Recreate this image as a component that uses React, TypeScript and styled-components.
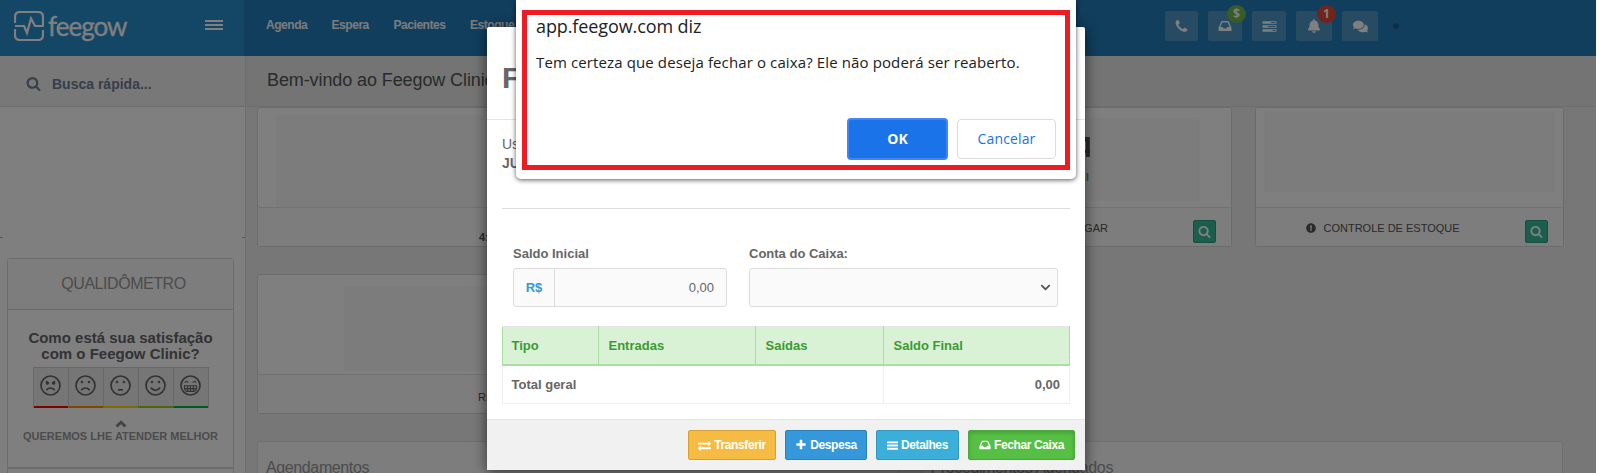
import React from "react";
import styled, { createGlobalStyle } from "styled-components";
import { FaBell, FaChevronDown, FaComments, FaExclamationCircle } from "react-icons/fa";

const icons = {
  search:
    "M1216 832q0-185-131.5-316.5t-316.5-131.5-316.5 131.5-131.5 316.5 131.5 316.5 316.5 131.5 316.5-131.5 131.5-316.5zm512 832q0 52-38 90t-90 38q-54 0-90-38l-343-342q-179 124-399 124-143 0-273.5-55.5t-225-150-150-225-55.5-273.5 55.5-273.5 150-225 225-150 273.5-55.5 273.5 55.5 225 150 150 225 55.5 273.5q0 220-124 399l343 343q37 37 37 90z",
  plus: "M1600 736v192q0 40-28 68t-68 28h-416v416q0 40-28 68t-68 28h-192q-40 0-68-28t-28-68v-416h-416q-40 0-68-28t-28-68v-192q0-40 28-68t68-28h416v-416q0-40 28-68t68-28h192q40 0 68 28t28 68v416h416q40 0 68 28t28 68z",
  exchange:
    "M1792 1184v192q0 13-9.5 22.5t-22.5 9.5h-1376v192q0 13-9.5 22.5t-22.5 9.5q-12 0-24-10l-319-320q-9-9-9-22 0-14 9-23l320-320q9-9 23-9 13 0 22.5 9.5t9.5 22.5v192h1376q13 0 22.5 9.5t9.5 22.5zm0-544q0 14-9 23l-320 320q-9 9-23 9-13 0-22.5-9.5t-9.5-22.5v-192h-1376q-13 0-22.5-9.5t-9.5-22.5v-192q0-13 9.5-22.5t22.5-9.5h1376v-192q0-14 9-23t23-9q12 0 24 10l319 319q9 9 9 23z",
  phone:
    "M1600 1240q0 27-10 70.5t-21 68.5q-21 50-122 106-94 51-186 51-27 0-53-3.5t-57.5-12.5-47-14.5-55.5-20.5-49-18q-98-35-175-83-127-79-264-216t-216-264q-48-77-83-175-3-9-18-49t-20.5-55.5-14.5-47-12.5-57.5-3.5-53q0-92 51-186 56-101 106-122 25-11 68.5-21t70.5-10q14 0 21 3 18 6 53 76 11 19 30 54t35 63.5 31 53.5q3 4 17.5 25t21.5 35.5 7 28.5q0 20-28.5 50t-62 55-62 53-28.5 46q0 9 5 22.5t8.5 20.5 14 24 11.5 19q76 137 174 235t235 174q2 1 19 11.5t24 14 20.5 8.5 22.5 5q18 0 46-28.5t53-62 55-62 50-28.5q14 0 28.5 7t35.5 21.5 25 17.5q25 15 53.5 31t63.5 35 54 30q70 35 76 53 3 7 3 21z",
  bars: "M0 224h1792v300H0zM0 746h1792v300H0zM0 1268h1792v300H0z",
  inbox:
    "M500 256h792q60 0 84 60l330 740q22 50 22 100v316q0 64-64 64H128q-64 0-64-64v-316q0-50 22-100l330-740q24-60 84-60zM560 448L300 1024h316l95 192h370l95-192h316L1232 448z",
  tasks:
    "M64 256h1664v320H64zM64 736h1664v320H64zM64 1216h1664v320H64zM1088 352v128h512v-128zM704 832v128h896v-128zM1280 1312v128h320v-128z",
};

interface IconProps {
  name: keyof typeof icons;
  size: number;
}

function Icon({ name, size }: IconProps) {
  return (
    <svg width={size} height={size} viewBox="0 0 1792 1792" fill="currentColor" fillRule="evenodd">
      <path d={icons[name]} />
    </svg>
  );
}

const faces = [
  { color: "#ff0000", mood: "angry" },
  { color: "#ff8c00", mood: "sad" },
  { color: "#ffd800", mood: "neutral" },
  { color: "#9acd16", mood: "happy" },
  { color: "#00b03c", mood: "grin" },
];

function Face({ mood }: { mood: string }) {
  return (
    <svg width="21" height="21" viewBox="0 0 21 21" fill="none" stroke="currentColor" strokeWidth="1.7">
      <circle cx="10.5" cy="10.5" r="9.5" />
      {mood === "angry" && (
        <>
          <path d="M6 6.3l3 2.2M15 6.3l-3 2.2M6.2 15.2q4.3-4.4 8.6 0" />
          <circle cx="7.2" cy="8.2" r="0.7" />
          <circle cx="13.8" cy="8.2" r="0.7" />
        </>
      )}
      {mood === "sad" && <path d="M6.2 15.2q4.3-4.4 8.6 0" />}
      {mood === "neutral" && <path d="M8 14.8h5" />}
      {mood === "happy" && <path d="M5.8 12.6q4.7 5.4 9.4 0" />}
      {mood === "grin" && (
        <path
          strokeWidth="1.1"
          d="M4.8 7.7q1.7-2.6 3.4 0M12.8 7.7q1.7-2.6 3.4 0M4.5 10.8h12v2.6q-.5 3-3 3h-6q-2.5 0-3-3zM4.7 13.6h11.6M7.7 11v5.3M10.5 11v5.3M13.3 11v5.3"
        />
      )}
      {["sad", "neutral", "happy"].includes(mood) && (
        <>
          <circle cx="7" cy="7" r="0.5" />
          <circle cx="14" cy="7" r="0.5" />
        </>
      )}
    </svg>
  );
}

function App() {
  return (
    <Page>
      <GlobalStyle />
      <Sidebar>
        <Brand>
          <svg width="30" height="30" viewBox="0 0 30 30" fill="none" stroke="#fff" strokeWidth="2.2">
            <path d="M1 12V6q0-5 5-5h18q5 0 5 5v9h-8L17 7.5 13 22l-3-7H1M1 18v6q0 5 5 5h18q5 0 5-5v-5" />
          </svg>
          <BrandName>feegow</BrandName>
          <Burger>
            <i />
            <i />
            <i />
          </Burger>
        </Brand>
        <QuickSearch>
          <Icon name="search" size={15} />
          <span>Busca rápida...</span>
        </QuickSearch>
        <Dashes>
          <i />
          <i />
        </Dashes>
        <Quality>
          <QualityTitle>QUALIDÔMETRO</QualityTitle>
          <Question>
            <span>Como está sua satisfação</span>
            <span>com o Feegow Clinic?</span>
          </Question>
          <FaceRow>
            {faces.map((f) => (
              <FaceCell key={f.mood} $color={f.color}>
                <Face mood={f.mood} />
              </FaceCell>
            ))}
          </FaceRow>
          <svg width="12" height="8" viewBox="0 0 12 8" fill="none" stroke="#888" strokeWidth="3">
            <path d="M1.5 6.5L6 2.2l4.5 4.3" />
          </svg>
          <Slogan>QUEREMOS LHE ATENDER MELHOR</Slogan>
        </Quality>
        <NextBox />
      </Sidebar>

      <Content>
        <Topbar>
          <Menu>
            <MenuItem $width={65.5}>Agenda</MenuItem>
            <MenuItem $width={62}>Espera</MenuItem>
            <MenuItem $width={76.5}>Pacientes</MenuItem>
            <MenuItem $width={80}>Estoque</MenuItem>
          </Menu>
          <Shortcuts>
            <Shortcut $width={33}>
              <Icon name="phone" size={15} />
            </Shortcut>
            <Shortcut $width={34}>
              <Icon name="inbox" size={14} />
              <Badge $color="#6cb84e">$</Badge>
            </Shortcut>
            <Shortcut $width={34}>
              <Icon name="tasks" size={15} />
            </Shortcut>
            <Shortcut $width={36}>
              <FaBell size={14} />
              <Badge $color="#df4a38">1</Badge>
            </Shortcut>
            <Shortcut $width={36}>
              <FaComments size={15} />
            </Shortcut>
            <Dot />
          </Shortcuts>
        </Topbar>
        <Welcome>Bem-vindo ao Feegow Clinic</Welcome>
        <Cards>
          <Card>
            <CardBody $padding="7px 0 0 18px">
              <Blank $width={207} $height={92} />
            </CardBody>
            <CardFooter>
              <Cut $left={221} $top={14}>
                <b>4:</b>
              </Cut>
            </CardFooter>
          </Card>
          <Card />
          <Card>
            <CardBody $padding="10px 0 0 167px">
              <CardValue>4</CardValue>
              <CardNote>VEI</CardNote>
              <Blank $width={109} $height={83} />
            </CardBody>
            <CardFooter>
              <CardLabel $left={90}>CONTAS A PAGAR</CardLabel>
              <LookButton>
                <Icon name="search" size={13} />
              </LookButton>
            </CardFooter>
          </Card>
          <Card>
            <CardBody $padding="3px 0 0 9px">
              <Blank $width={290} $height={81} />
            </CardBody>
            <CardFooter>
              <CardLabel $left={50}>
                <FaExclamationCircle size={10} />
                CONTROLE DE ESTOQUE
              </CardLabel>
              <LookButton>
                <Icon name="search" size={13} />
              </LookButton>
            </CardFooter>
          </Card>
          <Card>
            <CardBody $padding="11px 0 0 86px">
              <Blank $width={200} $height={85} />
            </CardBody>
            <CardFooter>
              <Cut $left={220} $top={7}>REC</Cut>
            </CardFooter>
          </Card>
        </Cards>
        <Panels>
          <Panel>Agendamentos</Panel>
          <Panel>Procedimentos Agendados</Panel>
        </Panels>
      </Content>

      <Backdrop />

      <Modal>
        <ModalHeader>F</ModalHeader>
        <ModalBody>
          <UserInfo>
            <span>Us</span>
            <b>JU</b>
          </UserInfo>
          <FormRow>
            <Field $width={214}>
              <label>Saldo Inicial</label>
              <InputGroup>
                <Addon>R$</Addon>
                <Amount>0,00</Amount>
              </InputGroup>
            </Field>
            <Field $width={309}>
              <label>Conta do Caixa:</label>
              <SelectBox>
                <FaChevronDown size={11} />
              </SelectBox>
            </Field>
          </FormRow>
          <Table>
            <thead>
              <tr>
                <th>Tipo</th>
                <th>Entradas</th>
                <th>Saídas</th>
                <th>Saldo Final</th>
              </tr>
            </thead>
            <tbody>
              <tr>
                <td colSpan={3}>Total geral</td>
                <td>0,00</td>
              </tr>
            </tbody>
          </Table>
        </ModalBody>
        <ModalFooter>
          <ActionButton $color="#f6bb42" $border="#d9a036" $width={88}>
            <Icon name="exchange" size={13} />
            Transferir
          </ActionButton>
          <ActionButton $color="#3498db" $border="#2a82bd" $width={82}>
            <Icon name="plus" size={12} />
            Despesa
          </ActionButton>
          <ActionButton $color="#3bafda" $border="#3298bf" $width={83}>
            <Icon name="bars" size={11} />
            Detalhes
          </ActionButton>
          <ActionButton $color="#56c044" $border="#48ab38" $width={107} $pressed>
            <Icon name="inbox" size={12} />
            Fechar Caixa
          </ActionButton>
        </ModalFooter>
      </Modal>

      <Alert>
        <AlertFrame>
          <AlertTitle>app.feegow.com diz</AlertTitle>
          <AlertText>Tem certeza que deseja fechar o caixa? Ele não poderá ser reaberto.</AlertText>
          <AlertButtons>
            <OkButton>OK</OkButton>
            <CancelButton>Cancelar</CancelButton>
          </AlertButtons>
        </AlertFrame>
      </Alert>
    </Page>
  );
}

const GlobalStyle = createGlobalStyle`
  * {
    box-sizing: border-box;
  }

  body {
    margin: 0;
    background: #fff;
    font-family: "Liberation Sans", Arial, sans-serif;
    font-size: 13px;
    color: #666;
  }

  button {
    font-family: inherit;
    padding: 0;
  }

  svg {
    flex: none;
  }
`;

const Page = styled.div`
  position: relative;
  display: flex;
  width: 1596px;
  height: 473px;
  overflow: hidden;
`;

const Sidebar = styled.div`
  width: 246px;
  flex: none;
  border-right: 1px solid #dcdcdc;
  background: #fff;
`;

const Brand = styled.div`
  display: flex;
  align-items: flex-start;
  width: 246px;
  height: 56px;
  padding: 10.5px 0 0 13.5px;
  background: linear-gradient(to right, #298ccd 244px, #227dba 244px);
`;

const BrandName = styled.div`
  width: 80px;
  margin: -2px 0 0 4.5px;
  font-family: Lato, sans-serif;
  font-size: 26px;
  line-height: 34px;
  letter-spacing: -1px;
  color: #fff;
  -webkit-text-stroke: 0.3px #fff;
`;

const Burger = styled.div`
  display: flex;
  flex-direction: column;
  gap: 2px;
  width: 18px;
  margin: 9.5px 0 0 77px;

  i {
    height: 2px;
    background: #fff;
  }
`;

const QuickSearch = styled.div`
  display: flex;
  align-items: center;
  gap: 11px;
  height: 51px;
  padding: 5px 0 0 26px;
  border-bottom: 1px solid #dcdcdc;
  background: #f0f0f0;
  font-size: 14px;
  font-weight: bold;
  color: #717c98;
`;

const Dashes = styled.div`
  display: flex;
  justify-content: space-between;
  align-items: flex-end;
  height: 131px;

  i {
    width: 3px;
    height: 1px;
    background: #aaa;
  }
`;

const Quality = styled.div`
  display: flex;
  flex-direction: column;
  align-items: center;
  width: 227px;
  height: 210px;
  margin: 20px 0 0 7px;
  border: 1px solid #d8d8d8;
  border-radius: 3px 3px 0 0;
  color: #999;
`;

const QualityTitle = styled.div`
  width: 100%;
  height: 51px;
  padding-left: 6px;
  border-bottom: 1px solid #d0d0d0;
  background: #fafafa;
  text-align: center;
  font-size: 16px;
  line-height: 50px;
  letter-spacing: -0.45px;
`;

const Question = styled.div`
  display: flex;
  flex-direction: column;
  align-items: center;
  margin-top: 20px;
  font-size: 15px;
  font-weight: bold;
  line-height: 16px;
  color: #666;
`;

const FaceRow = styled.div`
  display: flex;
  width: 176px;
  height: 41px;
  margin: 5px 0 12px 1px;
  border: 1px solid #cecece;
  border-bottom: 0;
  background: #ededed;
`;

const FaceCell = styled.div<{ $color: string }>`
  display: flex;
  flex: 1;
  align-items: center;
  justify-content: center;
  padding: 0 1.5px 3.5px 0;
  border-bottom: 2px solid ${(p) => p.$color};
  color: #666;

  & + & {
    border-left: 1px solid #cecece;
  }
`;

const Slogan = styled.div`
  margin-top: 1px;
  white-space: nowrap;
  font-size: 11px;
  font-weight: bold;
  line-height: 14px;
`;

const NextBox = styled.div`
  width: 227px;
  height: 20px;
  margin-left: 7px;
  border: 1px solid #d8d8d8;
  border-bottom: 0;
`;

const Content = styled.div`
  display: flex;
  flex: 1;
  flex-direction: column;
  background: #eee;
`;

const Topbar = styled.div`
  display: flex;
  height: 56px;
  flex: none;
  background: #227dba;
`;

const Menu = styled.div`
  display: flex;
  width: 919px;
  padding: 18px 0 0 20px;
`;

const MenuItem = styled.div<{ $width: number }>`
  width: ${(p) => p.$width}px;
  font-size: 12px;
  font-weight: bold;
  line-height: 15px;
  letter-spacing: -0.45px;
  color: #f4f8fb;
`;

const Shortcuts = styled.div`
  display: flex;
  gap: 10px;
  padding-top: 11px;
`;

const Shortcut = styled.div<{ $width: number }>`
  position: relative;
  display: flex;
  align-items: center;
  justify-content: center;
  width: ${(p) => p.$width}px;
  height: 30px;
  border-radius: 2px;
  background: #4f96c6;
  color: #fff;
`;

const Badge = styled.span<{ $color: string }>`
  position: absolute;
  top: -6px;
  right: -4px;
  width: 19px;
  height: 18px;
  border-radius: 50%;
  background: ${(p) => p.$color};
  text-align: center;
  font-family: "Open Sans", sans-serif;
  font-size: 12px;
  font-weight: bold;
  line-height: 18px;
`;

const Dot = styled.i`
  width: 6px;
  height: 6px;
  margin: 12px 0 0 5px;
  border-radius: 50%;
  background: #1a5d8d;
`;

const Welcome = styled.div`
  height: 51px;
  flex: none;
  padding-left: 21px;
  border-bottom: 1px solid #dcdcdc;
  background: #e8e8e8;
  font-size: 18px;
  line-height: 48px;
  letter-spacing: -0.1px;
  color: #555;
`;

const Cards = styled.div`
  display: grid;
  grid-template-columns: repeat(4, 309.5px);
  gap: 27px 23px;
  padding-left: 11px;
`;

const Card = styled.div`
  display: flex;
  flex-direction: column;
  height: 140px;
  border: 1px solid #d9d9d9;
  border-radius: 3px;
  background: #fff;
`;

const CardBody = styled.div<{ $padding: string }>`
  position: relative;
  height: 100px;
  flex: none;
  padding: ${(p) => p.$padding};
  border-bottom: 1px solid #e5e5e5;
`;

const Blank = styled.div<{ $width: number; $height: number }>`
  position: relative;
  width: ${(p) => p.$width}px;
  height: ${(p) => p.$height}px;
  background: #f8f8f8;
`;

const CardValue = styled.b`
  position: absolute;
  left: 153px;
  top: 22px;
  font-size: 30px;
  color: #555;
`;

const CardNote = styled.b`
  position: absolute;
  left: 148px;
  top: 63px;
  font-size: 11px;
  color: #37bc9b;
`;

const CardFooter = styled.div`
  display: flex;
  justify-content: space-between;
  height: 38px;
  padding-right: 15px;
  background: #fafafa;
`;

const CardLabel = styled.div<{ $left: number }>`
  display: flex;
  align-items: center;
  gap: 8px;
  height: 38px;
  margin-left: ${(p) => p.$left}px;
  padding-top: 2px;
  font-size: 11px;
  color: #555;
`;

const Cut = styled.div<{ $left: number; $top: number }>`
  height: 38px;
  padding: ${(p) => p.$top}px 0 0 ${(p) => p.$left}px;
  font-size: 11px;
  line-height: 30px;
  color: #555;
`;

const LookButton = styled.button`
  display: flex;
  align-items: center;
  justify-content: center;
  width: 23px;
  height: 23px;
  margin-top: 12px;
  border: 1px solid #2f9c80;
  border-radius: 2px;
  background: #37bc9b;
  color: #fff;
`;

const Panels = styled.div`
  display: grid;
  grid-template-columns: 641.5px 641.5px;
  gap: 23px;
  padding: 27px 0 0 11px;
`;

const Panel = styled.div`
  height: 60px;
  padding: 16px 0 0 8px;
  border: 1px solid #dedede;
  border-radius: 3px;
  background: #fafafa;
  font-size: 16px;
  line-height: 20px;
  letter-spacing: -0.38px;
  color: #999;
`;

const Backdrop = styled.div`
  position: absolute;
  inset: 0;
  background: rgba(0, 0, 0, 0.5);
`;

const Modal = styled.div`
  position: absolute;
  left: 487px;
  top: 27px;
  display: flex;
  flex-direction: column;
  width: 598px;
  height: 443px;
  border-radius: 2px;
  background: #fff;
  box-shadow: 0 2px 14px rgba(0, 0, 0, 0.6);
`;

const ModalHeader = styled.div`
  height: 93px;
  flex: none;
  padding: 33px 15px 0;
  border-bottom: 1px solid #e5e5e5;
  font-size: 30px;
  font-weight: bold;
  line-height: 35px;
`;

const ModalBody = styled.div`
  flex: 1;
  padding: 14px 15px 0;
`;

const UserInfo = styled.div`
  display: flex;
  flex-direction: column;
  height: 75px;
  padding-top: 1px;
  border-bottom: 1px solid #ddd;
  font-size: 14px;
  line-height: 19px;
`;

const FormRow = styled.div`
  display: flex;
  gap: 22px;
  padding: 36px 0 0 11px;
`;

const Field = styled.div<{ $width: number }>`
  display: flex;
  flex-direction: column;
  width: ${(p) => p.$width}px;

  label {
    height: 23px;
    font-weight: bold;
    line-height: 18px;
  }
`;

const InputGroup = styled.div`
  display: flex;
  height: 39px;
  border: 1px solid #ddd;
  border-radius: 3px;
  background: #fafafa;
  line-height: 37px;
`;

const Addon = styled.div`
  width: 41px;
  border-right: 1px solid #ddd;
  text-align: center;
  font-weight: bold;
  color: #3498db;
`;

const Amount = styled.div`
  flex: 1;
  padding-right: 12px;
  text-align: right;
`;

const SelectBox = styled.div`
  display: flex;
  align-items: center;
  justify-content: flex-end;
  height: 39px;
  padding-right: 6px;
  border: 1px solid #ddd;
  border-radius: 3px;
  background: #fafafa;
  color: #555;
`;

const Table = styled.table`
  width: 568px;
  margin-top: 19px;
  border-collapse: collapse;
  table-layout: fixed;
  text-align: left;

  th {
    width: 128px;
    height: 38px;
    padding: 0 9.5px;
    border: 1px solid #a9dfa1;
    border-top-color: #e5e5e5;
    border-bottom-width: 2px;
    background: #d9f2d6;
    color: #3c9a33;
  }

  th:first-child {
    width: 96px;
    padding-left: 8.5px;
  }

  th:nth-child(2) {
    width: 157px;
  }

  th:last-child {
    width: 186px;
  }

  td {
    height: 39px;
    padding: 0 9px 0 8.5px;
    border: 1px solid #eee;
    font-weight: bold;
  }

  td:last-child {
    text-align: right;
  }
`;

const ModalFooter = styled.div`
  display: flex;
  justify-content: flex-end;
  gap: 9px;
  height: 51px;
  flex: none;
  padding: 10px 10px 0;
  border-top: 1px solid #e5e5e5;
  background: #f1f1f1;
`;

const ActionButton = styled.button<{
  $color: string;
  $border: string;
  $width: number;
  $pressed?: boolean;
}>`
  display: flex;
  align-items: center;
  justify-content: center;
  gap: 3px;
  width: ${(p) => p.$width}px;
  height: 30px;
  border: 1px solid ${(p) => p.$border};
  border-radius: 2px;
  background: ${(p) => p.$color};
  box-shadow: ${(p) => (p.$pressed ? "inset 0 2px 4px rgba(0, 0, 0, 0.18)" : "none")};
  white-space: nowrap;
  font-size: 12px;
  font-weight: bold;
  letter-spacing: -0.4px;
  color: #fff;
`;

const Alert = styled.div`
  position: absolute;
  left: 516px;
  top: 0;
  width: 560px;
  height: 179px;
  padding: 10px 6px 0;
  border-radius: 0 0 5px 5px;
  background: #fff;
  box-shadow: 0 1px 5px rgba(0, 0, 0, 0.65);
  font-family: "Open Sans", "Noto Sans", sans-serif;
  color: #202124;
`;

const AlertFrame = styled.div`
  width: 548px;
  height: 160px;
  padding: 0 9px;
  border: 5px solid #ed1c24;
`;

const AlertTitle = styled.div`
  height: 24px;
  font-size: 18px;
  line-height: 22px;
  letter-spacing: -0.1px;
`;

const AlertText = styled.div`
  margin-top: 11px;
  white-space: nowrap;
  font-size: 15px;
  line-height: 24px;
  letter-spacing: 0.12px;
`;

const AlertButtons = styled.div`
  display: flex;
  align-items: center;
  justify-content: flex-end;
  gap: 9px;
  margin-top: 44px;
`;

const OkButton = styled.button`
  width: 101px;
  height: 42px;
  padding-bottom: 2px;
  border: 2px solid #4285f4;
  border-radius: 4px;
  background: #1a73e8;
  font-size: 14px;
  font-weight: 700;
  color: #fff;
`;

const CancelButton = styled.button`
  width: 99px;
  height: 40px;
  padding-bottom: 2px;
  border: 1px solid #dadce0;
  border-radius: 4px;
  background: #fff;
  font-size: 14px;
  font-weight: 500;
  letter-spacing: 0.15px;
  color: #1a73e8;
`;

export default App;
